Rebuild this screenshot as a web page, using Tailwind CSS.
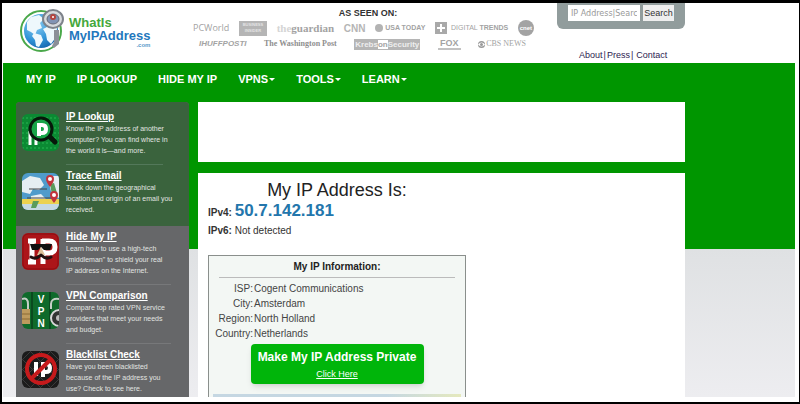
<!DOCTYPE html>
<html lang="en">
<head>
    <meta charset="UTF-8">
    <meta name="viewport" content="width=device-width, initial-scale=1.0">
    <title>What Is My IP Address</title>
    <script src="https://cdn.jsdelivr.net/npm/@tailwindcss/browser@4"></script>
</head>
<body class="flex min-h-screen flex-col border-t-3 border-r border-b-2 border-l-2 border-black bg-white pr-1 pb-[5px] pl-px font-['Liberation_Sans',Arial,sans-serif] text-[10px] text-[#333]">

    <!-- Header -->
    <header class="flex h-[60px] shrink-0">
        <a href="#" class="flex w-[190px] shrink-0 gap-1 pt-1 pl-4 font-bold">
            <svg class="h-[46px] w-[46px]" viewBox="0 0 46 46" fill="none">
                <defs>
                    <radialGradient id="globe" cx=".35" cy=".3" r=".8">
                        <stop offset="0" stop-color="#8fd0f4"/>
                        <stop offset=".6" stop-color="#2f93d6"/>
                        <stop offset="1" stop-color="#135fa8"/>
                    </radialGradient>
                </defs>
                <circle cx="22" cy="24" r="20" fill="#fff" stroke="#4aa84a" stroke-width="2"/>
                <circle cx="22" cy="24" r="17" fill="url(#globe)"/>
                <path d="M8 15 12 10l8-2 5 4-4 4 2 5-5 2-2 5-4-3-4-2zM15 26l7 2 2 5-4 7-3-1-1-6-3-4zM24 22l6-3 8 2-1 9-5 7-4-4-1-6z" fill="#eef8fc"/>
                <path d="M35 23h5v14l-5 4-2-2 2-4z" fill="#8b8f97"/>
                <ellipse cx="34" cy="12" rx="10" ry="9" fill="#d7dade" stroke="#7d828a" stroke-width="2"/>
                <ellipse cx="34" cy="12" rx="6" ry="5" fill="#8193b4" stroke="#656b78"/>
                <circle cx="34" cy="10" r="3" fill="#b5443f"/>
                <circle cx="34" cy="10" r="1" fill="#fff"/>
            </svg>
            <span class="flex flex-col pt-[9px] text-[13px] leading-[13px]">
                <span class="text-[#45a83c]">WhatIs</span>
                <span class="text-[#1f78bd]">MyIPAddress</span>
                <span class="text-right text-[6px] leading-[7px] text-[#5b9ccb]">.com</span>
            </span>
        </a>

        <section class="w-[341px] shrink-0 whitespace-nowrap text-[#a3a3a3]">
            <h2 class="pt-1 pl-[9px] text-center text-[9px] leading-[13px] font-bold text-[#333]">AS SEEN ON:</h2>
            <div class="flex h-[16px] items-center justify-between">
                <span class="font-['Open_Sans',sans-serif] text-[9px]">PCWorld</span>
                <span class="flex h-[15px] w-[28px] flex-col justify-center bg-[#b5b5b5] text-center text-[4px] leading-[6px] font-bold text-[#e4e4e4]"><span>BUSINESS</span><span>INSIDER</span></span>
                <span class="font-['Liberation_Serif',serif] text-[11px] font-bold"><span class="text-[#d5d5d5]">the</span>guardian</span>
                <span class="text-[10px] font-bold text-[#b5b5b5]">CNN</span>
                <span class="flex items-center gap-[2px] text-[7px] font-bold"><i class="h-2 w-2 rounded-full bg-[#b3b3b3]"></i>USA TODAY</span>
                <span class="flex items-center gap-1 text-[7px]">
                    <svg class="h-3 w-3" viewBox="0 0 12 12"><path fill="#a9a9a9" d="M0 0h12v12H0z"/><path fill="#fff" d="M5 2h2v3h3v2H7v3H5V7H2V5h3z"/></svg>
                    <span>DIGITAL <b>TRENDS</b></span>
                </span>
                <span class="flex h-4 w-4 items-center justify-center rounded-full bg-[#a3a3a3] text-[6px] font-bold text-white">cnet</span>
            </div>
            <div class="flex h-[16px] items-center justify-between pr-2 pl-[6px]">
                <span class="text-[8px] font-bold italic">IHUFFPOSTI</span>
                <span class="font-['Liberation_Serif',serif] text-[8px] font-bold text-[#8f8f8f]">The Washington Post</span>
                <span class="border border-[#b5b5b5] text-[8px] leading-[9px] font-bold"><span class="bg-[#b5b5b5] text-[#eee]">Krebs</span>on<span class="bg-[#b5b5b5] text-[#eee]">Security</span></span>
                <span class="flex flex-col text-center text-[9px] leading-[10px] font-bold"><span>FOX</span><span class="h-[2px] w-[23px] bg-[#c2c2c2]"></span></span>
                <span class="flex items-center gap-px font-['Liberation_Serif',serif] text-[8px]">
                    <svg class="h-[7px] w-[7px]" viewBox="0 0 14 14"><circle cx="7" cy="7" r="7" fill="#999"/><path d="M0 7q7-8 14 0-7 8-14 0z" fill="#fff"/><circle cx="7" cy="7" r="3" fill="#999"/></svg>
                    CBS NEWS
                </span>
            </div>
        </section>

        <div class="ml-[23px] flex w-[128px] shrink-0 flex-col justify-between pb-[2px]">
            <form class="flex h-[26px] gap-[3px] rounded-b-md bg-[#919c9c] px-[11px] pt-[2px]">
                <input type="text" aria-label="IP address search" placeholder="IP Address|Searc" class="h-4 w-[72px] bg-white px-[3px] font-['DejaVu_Sans',sans-serif] text-[8px] placeholder:text-[#999]">
                <button type="button" class="h-4 w-[32px] bg-[#eee] text-[9px] leading-4 text-[#333]">Search</button>
            </form>
            <div class="flex gap-px pl-[22px] text-[9px] leading-[12px] whitespace-nowrap text-[#2d2350]">
                <a href="#">About</a>|<a href="#">Press</a>|<a href="#" class="pl-[2px]">Contact</a>
            </div>
        </div>
    </header>

    <!-- Green band that turns grey further down -->
    <div class="flex flex-1 flex-col bg-[linear-gradient(#009600_186px,#dfe1e3_186px,#ededf0)]">
        <nav class="flex h-[32px] shrink-0 items-center gap-[21px] pl-[23px] text-[11px] font-bold whitespace-nowrap text-white">
            <a href="#">MY IP</a>
            <a href="#">IP LOOKUP</a>
            <a href="#">HIDE MY IP</a>
            <a href="#" class="flex items-center gap-px">VPNS <svg class="h-[3px] w-[6px]" viewBox="0 0 6 3" fill="currentColor"><path d="M0 0h6L3 3z"/></svg></a>
            <a href="#" class="flex items-center gap-px">TOOLS <svg class="h-[3px] w-[6px]" viewBox="0 0 6 3" fill="currentColor"><path d="M0 0h6L3 3z"/></svg></a>
            <a href="#" class="flex items-center gap-px">LEARN <svg class="h-[3px] w-[6px]" viewBox="0 0 6 3" fill="currentColor"><path d="M0 0h6L3 3z"/></svg></a>
        </nav>

        <div class="flex flex-1 gap-[9px] pt-[7px] pl-[13px]">
            <!-- Sidebar -->
            <aside class="flex w-[173px] shrink-0 flex-col overflow-hidden rounded-t-sm bg-[#666769] text-[7px] leading-[11px] whitespace-nowrap text-[#e2e5e2]">
                <div class="h-[124px] bg-[#3a633d] px-[6px] pt-[9px]">
                    <div class="flex gap-[7px]">
                        <svg class="mt-[3px] h-[37px] w-[37px] rounded-md" viewBox="0 0 37 37" fill="none">
                            <path fill="#0b8a33" d="M0 0h37v37H0z"/>
                            <path stroke="#28b552" stroke-dasharray="2 2" d="M0 4h37M0 9h37M0 14h37M0 19h37M0 24h37M0 29h37M0 34h37"/>
                            <path stroke="#fff" stroke-width="3" d="M8 17v14M14 24v7"/>
                            <circle cx="19" cy="15" r="11" fill="#18a548" stroke="#07180b" stroke-width="3"/>
                            <path stroke="#07180b" stroke-width="5" stroke-linecap="round" d="m28 23 5 5"/>
                            <path stroke="#fff" stroke-width="4" d="M17 9v13M16 11h4q4 0 4 4t-4 4h-4"/>
                        </svg>
                        <div>
                            <a href="#" class="block text-[10px] leading-[12px] font-bold text-white underline">IP Lookup</a>
                            <p>Know the IP address of another<br>computer? You can find where in<br>the world it is—and more.</p>
                        </div>
                    </div>
                    <hr class="mt-2 mr-5 mb-[5px] ml-[44px] border-[#53785a]">
                    <div class="flex gap-[7px]">
                        <svg class="mt-[3px] h-[37px] w-[37px] rounded-md" viewBox="0 0 37 37" fill="none">
                            <path fill="#4f9bcb" d="M0 0h37v37H0z"/>
                            <path fill="#e6eef2" d="M0 8 8 3l10 2 4 7-5 5-6-1-3 5-8-2zM9 23l10-2 5 5-6 9H9zM25 3h12v22l-7-3z"/>
                            <path fill="#ecd24f" d="M0 26h37v5H0z"/>
                            <path fill="#c6d9e2" d="M0 31h37v6H0z"/>
                            <path fill="#5a9c5c" d="m28 11 4-1 3 10-5 2zM11 28h6l-3 7h-5z"/>
                            <path stroke="#444" d="M7 16h18M5 25h25"/>
                            <path fill="#c2343c" d="M24 6a4 4 0 1 1 8 0q0 3-4 8-4-5-4-8zM28 22a4 4 0 1 1 8 0q0 3-4 8-4-5-4-8z"/>
                            <circle cx="28" cy="6" r="2" fill="#fff"/><circle cx="32" cy="22" r="2" fill="#fff"/>
                        </svg>
                        <div>
                            <a href="#" class="block text-[10px] leading-[12px] font-bold text-white underline">Trace Email</a>
                            <p>Track down the geographical<br>location and origin of an email you<br>received.</p>
                        </div>
                    </div>
                </div>
                <div class="px-[6px] pt-[5px]">
                    <div class="flex gap-[7px]">
                        <svg class="mt-[2px] h-[37px] w-[37px] rounded-md" viewBox="0 0 37 37" fill="none">
                            <path fill="#ac1519" d="M0 0h37v37H0z"/>
                            <rect x="1" y="1" width="35" height="35" rx="5" stroke="#8b0e12" stroke-width="1"/>
                            <path stroke="#fff" stroke-width="5" d="M6 8h8M10 6v24M6 29h8M21 6v25M20 8h7q6 0 6 6t-6 6h-7"/>
                            <path fill="#111" d="M8 11h22l-2 6h-6l-3-3-3 3h-6z"/>
                            <path fill="#dcbf98" d="m19 14 4 8h-8z"/>
                            <path stroke="#211" stroke-width="3" stroke-linecap="round" d="M19 22q-5 5-10 2M19 22q5 5 10 2"/>
                        </svg>
                        <div>
                            <a href="#" class="block text-[10px] leading-[12px] font-bold text-white underline">Hide My IP</a>
                            <p>Learn how to use a high-tech<br>"middleman" to shield your real<br>IP address on the Internet.</p>
                        </div>
                    </div>
                    <hr class="mt-2 mr-3 mb-[5px] ml-[44px] border-[#77787a]">
                    <div class="flex gap-[7px]">
                        <svg class="mt-[2px] h-[37px] w-[37px] rounded-md" viewBox="0 0 37 37" fill="none">
                            <path fill="#0f6a2b" d="M0 0h37v37H0z"/>
                            <path stroke="#0a4a1f" stroke-width="2" d="M10 0v37M28 0v37"/>
                            <path stroke="#c5cfc7" stroke-width="2" d="M0 7q6-2 6 5v5M29 17v-5q0-6 8-5"/>
                            <path fill="#bd9a5d" d="M0 17h8v15H0z"/><path stroke="#8b6a35" d="M0 22h8M0 27h8"/>
                            <circle cx="37" cy="26" r="8" fill="#333" stroke="#d8d8d8" stroke-width="2"/><circle cx="37" cy="26" r="3" fill="#bbb"/>
                            <g fill="#fff" font-family="Liberation Sans" font-weight="bold" font-size="10" text-anchor="middle"><text x="19" y="11">V</text><text x="19" y="23">P</text><text x="19" y="35">N</text></g>
                        </svg>
                        <div>
                            <a href="#" class="block text-[10px] leading-[12px] font-bold text-white underline">VPN Comparison</a>
                            <p>Compare top rated VPN service<br>providers that meet your needs<br>and budget.</p>
                        </div>
                    </div>
                    <hr class="mt-2 mr-3 mb-[5px] ml-[44px] border-[#77787a]">
                    <div class="flex gap-[7px]">
                        <svg class="mt-[2px] h-[37px] w-[37px] rounded-md" viewBox="0 0 37 37" fill="none">
                            <path fill="#1b1b1b" d="M0 0h37v37H0z"/>
                            <path stroke="#3a3a3a" d="m0 9 9-9M0 19 19 0M0 29 29 0M8 37 37 8M18 37l19-19M28 37l9-9M0 28l9 9M0 18l19 19M0 8l29 29M8 0l29 29M18 0l19 19M28 0l9 9"/>
                            <path stroke="#fff" stroke-width="4" d="M14 11v14M21 11v15M20 13h4q4 0 4 4t-4 4h-4"/>
                            <circle cx="19" cy="18" r="14" stroke="#c61a1c" stroke-width="4"/>
                            <path stroke="#c61a1c" stroke-width="4" d="m29 8-20 20"/>
                        </svg>
                        <div>
                            <a href="#" class="block text-[10px] leading-[12px] font-bold text-white underline">Blacklist Check</a>
                            <p>Have you been blacklisted<br>because of the IP address you<br>use? Check to see here.</p>
                        </div>
                    </div>
                </div>
            </aside>

            <!-- Content -->
            <main class="flex w-[487px] shrink-0 flex-col gap-[11px]">
                <div class="h-[60px] shrink-0 bg-white"></div>
                <div class="flex flex-1 flex-col bg-white pt-[7px] pl-[10px]">
                    <h1 class="w-[258px] text-center text-[18px] leading-[20px] text-[#222]">My IP Address Is:</h1>
                    <p class="leading-[22px]"><b>IPv4:</b> <b class="text-[17px] text-[#2376ac]">50.7.142.181</b></p>
                    <p class="leading-[14px]"><b>IPv6:</b> Not detected</p>

                    <section class="mt-[17px] flex w-[258px] flex-1 flex-col border border-b-0 border-[#8a8f8c] bg-[#f3f7f4]">
                        <h2 class="mx-[10px] border-b border-[#bbb] pt-1 pb-[3px] text-center leading-[14px] font-bold text-[#222]">My IP Information:</h2>
                        <dl class="mt-[3px] grid grid-cols-[44px_1fr] gap-x-px leading-[15px] text-[#444]">
                            <dt class="justify-self-end">ISP:</dt><dd>Cogent Communications</dd>
                            <dt class="justify-self-end">City:</dt><dd>Amsterdam</dd>
                            <dt class="justify-self-end">Region:</dt><dd>North Holland</dd>
                            <dt class="justify-self-end">Country:</dt><dd>Netherlands</dd>
                        </dl>
                        <button type="button" class="mt-[3px] h-[40px] w-[173px] self-center rounded bg-[#00b50a] text-white shadow-md">
                            <span class="block text-[12px] leading-[20px] font-bold">Make My IP Address Private</span>
                            <span class="block text-[9px] leading-[14px] underline">Click Here</span>
                        </button>
                        <div class="mx-1 mt-auto h-[3px] bg-linear-to-r from-[#c5d7e2] from-70% to-[#e5e9bd]"></div>
                    </section>
                </div>
            </main>
        </div>
    </div>

</body>
</html>
